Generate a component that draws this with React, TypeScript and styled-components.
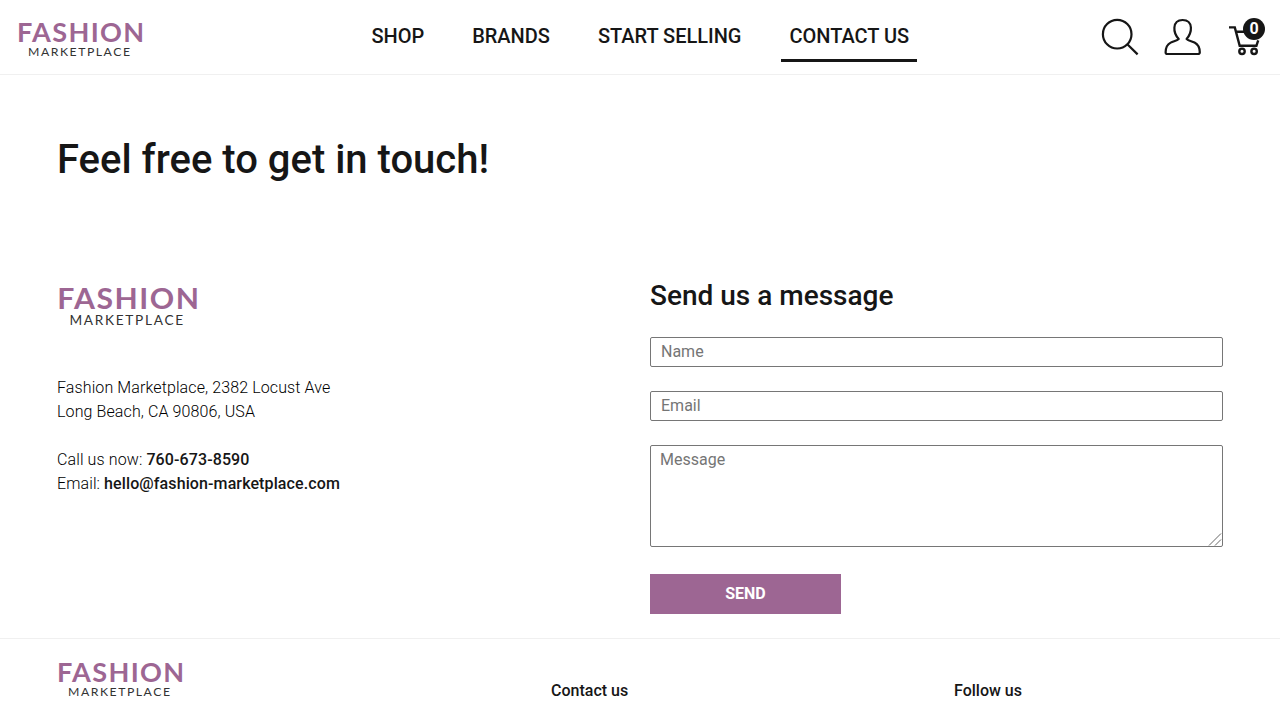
import React from "react";
import styled, { createGlobalStyle } from "styled-components";

const GlobalStyle = createGlobalStyle`
  *, *::before, *::after { box-sizing: border-box; }
  html, body { margin: 0; height: 100%; overflow: hidden; }
  body {
    font-family: Roboto, "Liberation Sans", sans-serif;
    font-size: 16px;
    font-weight: 300;
    line-height: 24px;
    color: #161616;
    background: #fff;
  }
`;

const Page = styled.div`
  display: flex;
  flex-direction: column;
  height: 720px;
  overflow: hidden;
`;

const Header = styled.header`
  display: grid;
  grid-template-columns: 363.4px auto 1fr;
  align-items: start;
  height: 75px;
  border-bottom: 1px solid #f0f0f0;
`;

const HeaderLogo = styled.div`
  padding: 20px 0 0 16px;
`;

const LogoSvg = styled.svg`
  display: block;
  overflow: visible;
`;

const Nav = styled.nav`
  display: flex;
  gap: 32px;
  padding-top: 12px;
`;

const NavLink = styled.a<{ $active?: boolean }>`
  height: 50px;
  padding: 9px 8px 0;
  line-height: 30px;
  font-size: 20px;
  font-weight: 500;
  letter-spacing: -0.015px;
  white-space: nowrap;
  border-bottom: 3px solid ${(p) => (p.$active ? "#161616" : "transparent")};
`;

const Actions = styled.div`
  display: flex;
  justify-content: flex-end;
  gap: 26px;
  padding: 18px 15px 0 0;
`;

const ActionButton = styled.a`
  position: relative;
  display: block;
  height: 38px;

  svg { display: block; overflow: visible; }
`;

const CartBadge = styled.span`
  position: absolute;
  top: 0;
  right: 0;
  width: 22px;
  height: 22px;
  border-radius: 50%;
  background: #161616;
  color: #fff;
  font-size: 16px;
  font-weight: 700;
  line-height: 22px;
  text-align: center;
`;

const Main = styled.main`
  height: 563px;
  padding: 55px 57px 0;
`;

const Title = styled.h1`
  margin: 0;
  font-size: 40px;
  line-height: 60px;
  font-weight: 500;
`;

const Columns = styled.div`
  display: grid;
  grid-template-columns: 573px 573px;
  column-gap: 20px;
  padding-top: 83px;
`;

const Info = styled.section`
  padding-top: 12px;
`;

const Address = styled.p`
  margin: 0 0 24px;
  color: #000;
  letter-spacing: 0.11px;

  b { font-weight: 500; color: #161616; }
`;

const InfoLogo = styled.div`
  height: 91px;
  margin-left: -1px;
`;

const Form = styled.form`
  display: flex;
  flex-direction: column;
  align-items: flex-start;
`;

const FormTitle = styled.h2`
  margin: 0;
  padding: 2px 0 20px;
  font-size: 28px;
  line-height: 42px;
  font-weight: 500;
`;

const Input = styled.input`
  width: 100%;
  height: 30px;
  margin-bottom: 24px;
  padding: 0 10px 2px;
  border: 1px solid #767676;
  border-radius: 2px;
  font: 400 16px/24px Roboto, sans-serif;

  &::placeholder { color: #757575; }
`;

const MessageField = styled.div`
  position: relative;
  width: 100%;
  height: 102px;
  margin-bottom: 27px;
`;

const TextArea = styled.textarea`
  display: block;
  width: 100%;
  height: 102px;
  padding: 2px 9px;
  border: 1px solid #767676;
  border-radius: 2px;
  font: 400 16px/24px Roboto, sans-serif;
  resize: none;

  &::placeholder { color: #757575; }
`;

const ResizeGrip = styled.svg`
  position: absolute;
  right: 1px;
  bottom: 1px;
`;

const SendButton = styled.button`
  width: 191px;
  height: 40px;
  padding: 0;
  border: 0;
  background: #9d6693;
  color: #fff;
  font: 700 16px/24px Roboto, sans-serif;
`;

const Footer = styled.footer`
  display: grid;
  grid-template-columns: 495px 403px auto;
  height: 82px;
  padding: 21px 0 0 56px;
  border-top: 1px solid #f0f0f0;
`;

const FooterTitle = styled.h3`
  margin: 19px 0 0;
  font-size: 16px;
  line-height: 24px;
  font-weight: 500;
`;

function Logo({ width }: { width: number }) {
  return (
    <LogoSvg width={width} height={(width * 38) / 130} viewBox="0 0 130 38">
      <text
        x="1"
        y="21.9"
        fontFamily="Lato, sans-serif"
        fontSize="26.2"
        fontWeight="700"
        fill="#9d6693"
        letterSpacing="1.3"
        textLength="128.5"
        lengthAdjust="spacingAndGlyphs"
      >
        FASHION
      </text>
      <text
        x="12"
        y="35.6"
        fontFamily="Lato, sans-serif"
        fontSize="11.2"
        fontWeight="400"
        fill="#333"
        letterSpacing="1.4"
        textLength="103.5"
        lengthAdjust="spacingAndGlyphs"
      >
        MARKETPLACE
      </text>
    </LogoSvg>
  );
}

const stroke = { fill: "none", stroke: "#161616", strokeWidth: 2.2 };

function SearchIcon() {
  return (
    <svg width="38" height="38" viewBox="0 0 38 38" {...stroke}>
      <circle cx="17.2" cy="16.2" r="14.3" />
      <path d="M27.3 26.3 37.6 36.4" />
    </svg>
  );
}

function UserIcon() {
  return (
    <svg width="38" height="38" viewBox="0 0 38 38" {...stroke} strokeLinejoin="round">
      <path d="M14.7 21C11.5 17.4 10 14.3 10.4 9.5C10.8 4.5 13.8 2 18.6 2S26.5 4.5 26.9 9.5C27.2 14.3 25.7 17.4 22.6 21C24.2 22.6 27.7 23.2 30.5 24.6C34.4 26.6 35.7 29.8 35.8 34.3Q35.8 36 34 36H3.2Q1.6 36 1.6 34.3C1.6 29.8 2.9 26.6 6.7 24.6C9.5 23.2 13.1 22.6 14.7 21Z" />
    </svg>
  );
}

function CartIcon() {
  return (
    <svg width="37" height="38" viewBox="0 0 37 38" {...stroke} strokeWidth={2.4}>
      <path d="M1 9.4H6.8L11.7 27.8H28.4L30.2 22.3M8.2 13.8H16" />
      <circle cx="14" cy="33.3" r="2.7" />
      <circle cx="26.1" cy="33.3" r="2.7" />
    </svg>
  );
}

export default function App() {
  return (
    <Page>
      <GlobalStyle />
      <Header>
        <HeaderLogo><Logo width={130} /></HeaderLogo>
        <Nav>
          <NavLink>SHOP</NavLink>
          <NavLink>BRANDS</NavLink>
          <NavLink>START SELLING</NavLink>
          <NavLink $active>CONTACT US</NavLink>
        </Nav>
        <Actions>
          <ActionButton><SearchIcon /></ActionButton>
          <ActionButton><UserIcon /></ActionButton>
          <ActionButton><CartIcon /><CartBadge>0</CartBadge></ActionButton>
        </Actions>
      </Header>
      <Main>
        <Title>Feel free to get in touch!</Title>
        <Columns>
          <Info>
            <InfoLogo><Logo width={145} /></InfoLogo>
            <Address>
              Fashion Marketplace, 2382 Locust Ave<br />
              Long Beach, CA 90806, USA
            </Address>
            <Address>
              Call us now: <b>760-673-8590</b><br />
              Email: <b>hello@fashion-marketplace.com</b>
            </Address>
          </Info>
          <Form>
            <FormTitle>Send us a message</FormTitle>
            <Input placeholder="Name" />
            <Input placeholder="Email" />
            <MessageField>
              <TextArea placeholder="Message" />
              <ResizeGrip width="15" height="15" viewBox="0 0 15 15" fill="none" stroke="#555" strokeWidth="0.9">
                <path d="M2 14.5 14 2.5M8 14.5 14 8.5" />
              </ResizeGrip>
            </MessageField>
            <SendButton type="button">SEND</SendButton>
          </Form>
        </Columns>
      </Main>
      <Footer>
        <Logo width={130} />
        <FooterTitle>Contact us</FooterTitle>
        <FooterTitle>Follow us</FooterTitle>
      </Footer>
    </Page>
  );
}
